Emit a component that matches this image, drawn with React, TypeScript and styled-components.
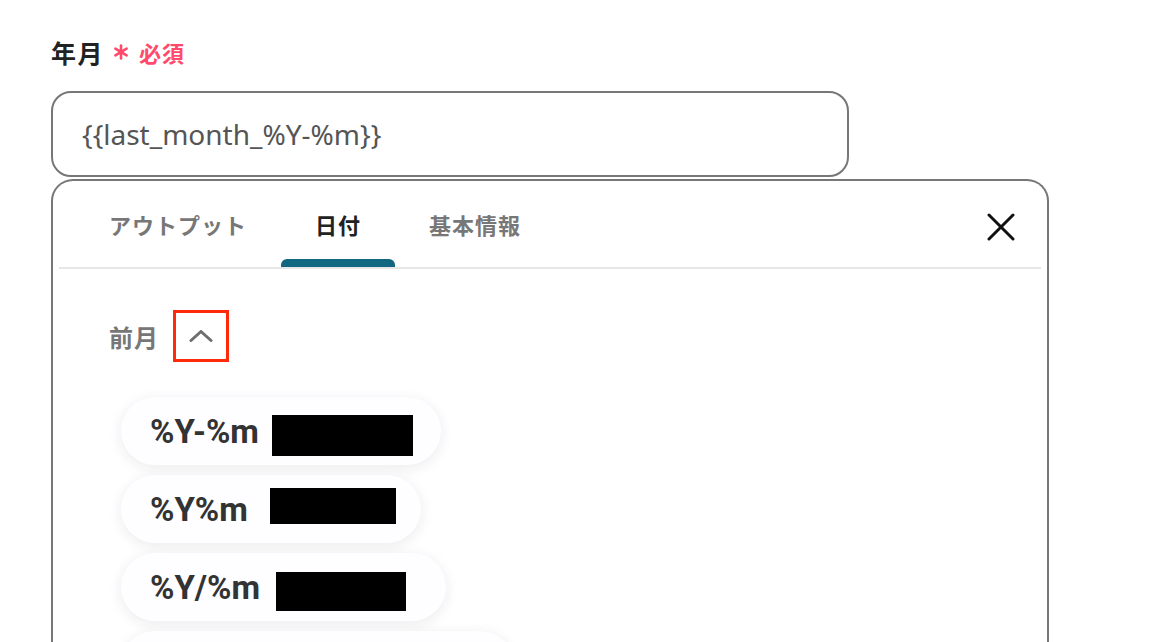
import React from "react";
import styled, { createGlobalStyle } from "styled-components";

const Global = createGlobalStyle`
  html, body { margin: 0; padding: 0; background: #ffffff; }
  body { font-family: "Noto Sans", "Noto Sans CJK JP", sans-serif; overflow: hidden; }
`;

const Page = styled.div`
  width: 1162px;
  height: 642px;
  overflow: hidden;
  padding: 33px 0 0 51px;
  box-sizing: border-box;
`;

const LabelRow = styled.div`
  display: flex;
  align-items: center;
  height: 38px;
  gap: 9px;
`;

const LabelText = styled.span`
  font-family: "Noto Sans CJK JP", sans-serif;
  font-weight: 700;
  font-size: 25px;
  color: #222222;
  letter-spacing: 1.5px;
`;

const Required = styled.span`
  display: inline-flex;
  align-items: center;
  gap: 10px;
  color: #ff4a6b;
  font-family: "Noto Sans CJK JP", sans-serif;
  font-weight: 700;
  font-size: 22px;
  letter-spacing: 1px;
`;

const InputBox = styled.div`
  margin-top: 20px;
  width: 798px;
  height: 86px;
  box-sizing: border-box;
  border: 2px solid #777777;
  border-radius: 20px;
  display: flex;
  align-items: center;
  padding-left: 29px;
  font-family: "Noto Sans", sans-serif;
  font-size: 28px;
  color: #555555;
`;

const Panel = styled.div`
  margin-top: 2px;
  width: 998px;
  height: 520px;
  box-sizing: border-box;
  border: 2px solid #777777;
  border-bottom: none;
  border-radius: 22px 22px 0 0;
  padding: 0 6px;
`;

const TabBar = styled.div`
  display: flex;
  align-items: stretch;
  height: 86px;
  border-bottom: 2px solid #e6e6e6;
  padding-left: 16px;
  padding-right: 26px;
`;

const Tab = styled.div<{ $active?: boolean }>`
  position: relative;
  display: flex;
  align-items: center;
  padding: 0 34px;
  font-family: "Noto Sans CJK JP", sans-serif;
  font-weight: 700;
  font-size: 22px;
  letter-spacing: 1px;
  color: ${(p) => (p.$active ? "#222222" : "#777777")};
  &::after {
    content: "";
    display: ${(p) => (p.$active ? "block" : "none")};
    position: absolute;
    left: 0;
    right: 0;
    bottom: 0;
    height: 8px;
    border-radius: 6px 6px 0 0;
    background: #10677f;
  }
`;

const Spacer = styled.div`
  flex: 1;
`;

const CloseButton = styled.div`
  display: flex;
  align-items: center;
  padding-top: 6px;
`;

const Section = styled.div`
  padding: 41px 0 0 50px;
`;

const SectionHead = styled.div`
  display: flex;
  align-items: center;
  gap: 14px;
`;

const SectionTitle = styled.span`
  font-family: "Noto Sans CJK JP", sans-serif;
  font-weight: 700;
  font-size: 24px;
  color: #777777;
  letter-spacing: 1px;
`;

const ToggleBox = styled.div`
  width: 56px;
  height: 52px;
  box-sizing: border-box;
  border: 3px solid #ff2a0a;
  display: flex;
  align-items: center;
  justify-content: center;
`;

const ChipList = styled.div`
  display: flex;
  flex-direction: column;
  align-items: flex-start;
  gap: 10px;
  margin-top: 35px;
  margin-left: 12px;
`;

const Chip = styled.div<{ $pr?: number }>`
  display: flex;
  align-items: center;
  height: 68px;
  box-sizing: border-box;
  padding: 0 ${(p) => p.$pr ?? 28}px 0 29px;
  border-radius: 34px;
  background: #fefdff;
  box-shadow: 0 3px 14px rgba(40, 30, 60, 0.09);
  font-family: Roboto, "Noto Sans", sans-serif;
  font-weight: 700;
  font-size: 33px;
  color: #333333;
`;

const Redacted = styled.span<{ $w: number; $h: number; $ml: number; $dy: number }>`
  display: inline-block;
  width: ${(p) => p.$w}px;
  height: ${(p) => p.$h}px;
  margin-left: ${(p) => p.$ml}px;
  transform: translateY(${(p) => p.$dy}px);
  background: #000000;
`;

const EmptyChip = styled(Chip)`
  width: 393px;
`;

const Asterisk = () => (
  <svg width="16" height="16" viewBox="0 0 16 16" fill="none" stroke="#ff4a6b" strokeWidth="2.6" strokeLinecap="round">
    <line x1="8" y1="1.5" x2="8" y2="14.5" />
    <line x1="2.4" y1="4.7" x2="13.6" y2="11.3" />
    <line x1="2.4" y1="11.3" x2="13.6" y2="4.7" />
  </svg>
);

export default function App() {
  return (
    <>
      <Global />
      <Page>
        <LabelRow>
          <LabelText>年月</LabelText>
          <Required>
            <Asterisk />
            必須
          </Required>
        </LabelRow>
        <InputBox>{"{{last_month_%Y-%m}}"}</InputBox>
        <Panel>
          <TabBar>
            <Tab>アウトプット</Tab>
            <Tab $active>日付</Tab>
            <Tab>基本情報</Tab>
            <Spacer />
            <CloseButton>
              <svg width="28" height="28" viewBox="0 0 28 28" fill="none" stroke="#111111" strokeWidth="3" strokeLinecap="round">
                <line x1="2" y1="2" x2="26" y2="26" />
                <line x1="26" y1="2" x2="2" y2="26" />
              </svg>
            </CloseButton>
          </TabBar>
          <Section>
            <SectionHead>
              <SectionTitle>前月</SectionTitle>
              <ToggleBox>
                <svg width="24" height="12" viewBox="0 0 24 12" fill="none" stroke="#6e6e6e" strokeWidth="3" strokeLinecap="round" strokeLinejoin="round">
                  <polyline points="2,10.5 12,1.5 22,10.5" />
                </svg>
              </ToggleBox>
            </SectionHead>
            <ChipList>
              <Chip>
                %Y-%m
                <Redacted $w={141} $h={41} $ml={13} $dy={4} />
              </Chip>
              <Chip $pr={25}>
                %Y%m
                <Redacted $w={126} $h={36} $ml={22} $dy={-3} />
              </Chip>
              <Chip $pr={40}>
                %Y/%m
                <Redacted $w={130} $h={39} $ml={16} $dy={4} />
              </Chip>
              <EmptyChip />
            </ChipList>
          </Section>
        </Panel>
      </Page>
    </>
  );
}
